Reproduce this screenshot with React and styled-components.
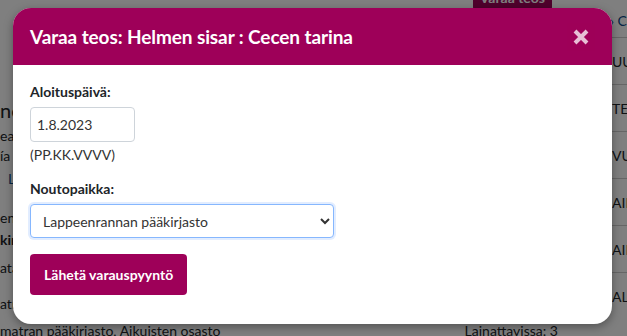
import styled, { createGlobalStyle } from "styled-components";

const GlobalStyle = createGlobalStyle`
  html, body {
    margin: 0;
    padding: 0;
  }
  body {
    font-family: Lato, "Open Sans", sans-serif;
    color: #212529;
    background: #fff;
  }
`;

const Page = styled.div`
  position: relative;
  width: 627px;
  height: 336px;
  overflow: hidden;
  display: flex;
  background: #fff;
`;

const LeftCol = styled.div`
  width: 300px;
  padding-top: 98px;
  display: flex;
  flex-direction: column;
  font-size: 14px;
  white-space: nowrap;
`;

const Heading = styled.div`
  font-size: 20px;
  line-height: 24px;
`;

const Line = styled.div`
  line-height: 20px;
  margin-top: ${(p) => p.$gap || 0}px;
  margin-left: ${(p) => p.$indent || 0}px;
  font-weight: ${(p) => (p.$bold ? 700 : 400)};
  color: ${(p) => (p.$link ? "#0a4a8a" : "#212529")};
`;

const MidCol = styled.div`
  flex: 1;
  display: flex;
  flex-direction: column;
  align-items: flex-end;
  justify-content: space-between;
  padding-right: 45px;
`;

const TopButton = styled.div`
  background: #9e0059;
  color: #fff;
  font-size: 14px;
  font-weight: 700;
  padding: 0 7px;
  height: 16px;
  line-height: 8px;
  margin-top: -6px;
  margin-right: 0;
  border-radius: 0 0 3px 3px;
`;

const Availability = styled.div`
  font-size: 14px;
  line-height: 16px;
  margin-bottom: -3px;
  margin-right: -6px;
  white-space: nowrap;
`;

const RightCol = styled.div`
  width: 30px;
  padding-top: 12px;
  font-size: 14px;
  white-space: nowrap;
  overflow: hidden;
`;

const Crumb = styled.div`
  height: 25px;
  color: #0a4a8a;
  padding-left: 13px;
`;

const Row = styled.div`
  height: 46px;
  border-top: 1px solid #ccc;
  display: flex;
  align-items: center;
  padding-left: 15px;
  text-transform: uppercase;
`;

const Backdrop = styled.div`
  position: absolute;
  inset: 0;
  background: rgba(0, 0, 0, 0.5);
`;

const Modal = styled.div`
  position: absolute;
  left: 13px;
  top: 8px;
  width: 599px;
  height: 316px;
  background: #fff;
  border-radius: 18px;
  overflow: hidden;
  box-shadow: 0 3px 10px rgba(0, 0, 0, 0.35);
  display: flex;
  flex-direction: column;
`;

const Header = styled.div`
  height: 57px;
  background: #9e0059;
  display: flex;
  align-items: center;
  justify-content: space-between;
  padding: 0 22px 0 17px;
  flex-shrink: 0;
`;

const Title = styled.h2`
  margin: 0;
  color: #fff;
  font-size: 19px;
  font-weight: 700;
  letter-spacing: -0.1px;
`;

const Close = styled.button`
  border: 0;
  background: none;
  padding: 0;
  width: 18px;
  height: 18px;
  display: flex;
  opacity: 0.75;
  cursor: pointer;
`;

const Body = styled.div`
  padding: 18px 17px;
  display: flex;
  flex-direction: column;
  align-items: flex-start;
`;

const Label = styled.label`
  font-size: 14px;
  font-weight: 700;
  line-height: 18px;
  margin-bottom: 6px;
`;

const DateInput = styled.input`
  box-sizing: border-box;
  width: 105px;
  height: 35px;
  border: 1px solid #ced4da;
  border-radius: 4px;
  padding: 0 6px;
  font-family: inherit;
  font-size: 14px;
  color: #333;
`;

const Hint = styled.div`
  font-size: 14px;
  color: #333;
  line-height: 18px;
  margin-top: 4px;
  margin-bottom: 16px;
`;

const SelectBox = styled.select`
  box-sizing: border-box;
  width: 304px;
  height: 34px;
  border: 1px solid #86b7fe;
  border-radius: 4px;
  box-shadow: 0 0 0 2px rgba(13, 110, 253, 0.12);
  padding: 0 8px;
  font-family: inherit;
  font-size: 14px;
  color: #333;
  background: #fff;
  outline: none;
`;

const Submit = styled.button`
  margin-top: 16px;
  height: 41px;
  padding: 0 14px;
  background: #9e0059;
  color: #fff;
  border: 0;
  border-radius: 4px;
  font-family: inherit;
  font-size: 14px;
  font-weight: 700;
`;

export default function App() {
  return (
    <>
      <GlobalStyle />
      <Page>
        <LeftCol>
          <Heading>ne sisar</Heading>
          <Line $gap={4}>earance</Line>
          <Line>ía</Line>
          <Line $indent={8} $gap={3} $link>Lue lisää</Line>
          <Line $gap={19}>en kirjastot</Line>
          <Line $bold $gap={2}>kirjasto</Line>
          <Line $gap={8}>atalogi</Line>
          <Line $gap={16}>atra</Line>
          <Line $gap={7}>matran pääkirjasto, Aikuisten osasto</Line>
        </LeftCol>
        <MidCol>
          <TopButton>Varaa teos</TopButton>
          <Availability>Lainattavissa: 3</Availability>
        </MidCol>
        <RightCol>
          <Crumb>› Cecen</Crumb>
          <Row>Uutuus</Row>
          <Row>Tekijä</Row>
          <Row>Vuosi</Row>
          <Row>Aihe</Row>
          <Row>Aihe</Row>
          <Row>Alue</Row>
        </RightCol>
        <Backdrop />
        <Modal>
          <Header>
            <Title>Varaa teos: Helmen sisar : Cecen tarina</Title>
            <Close aria-label="Sulje">
              <svg width="18" height="18" viewBox="0 0 18 18">
                <path
                  d="M3 3 L15 15 M15 3 L3 15"
                  stroke="#fff"
                  strokeWidth="4"
                  strokeLinecap="butt"
                />
              </svg>
            </Close>
          </Header>
          <Body>
            <Label>Aloituspäivä:</Label>
            <DateInput defaultValue="1.8.2023" />
            <Hint>(PP.KK.VVVV)</Hint>
            <Label>Noutopaikka:</Label>
            <SelectBox defaultValue="lpr">
              <option value="lpr">Lappeenrannan pääkirjasto</option>
              <option value="ima">Imatran pääkirjasto</option>
            </SelectBox>
            <Submit>Lähetä varauspyyntö</Submit>
          </Body>
        </Modal>
      </Page>
    </>
  );
}
